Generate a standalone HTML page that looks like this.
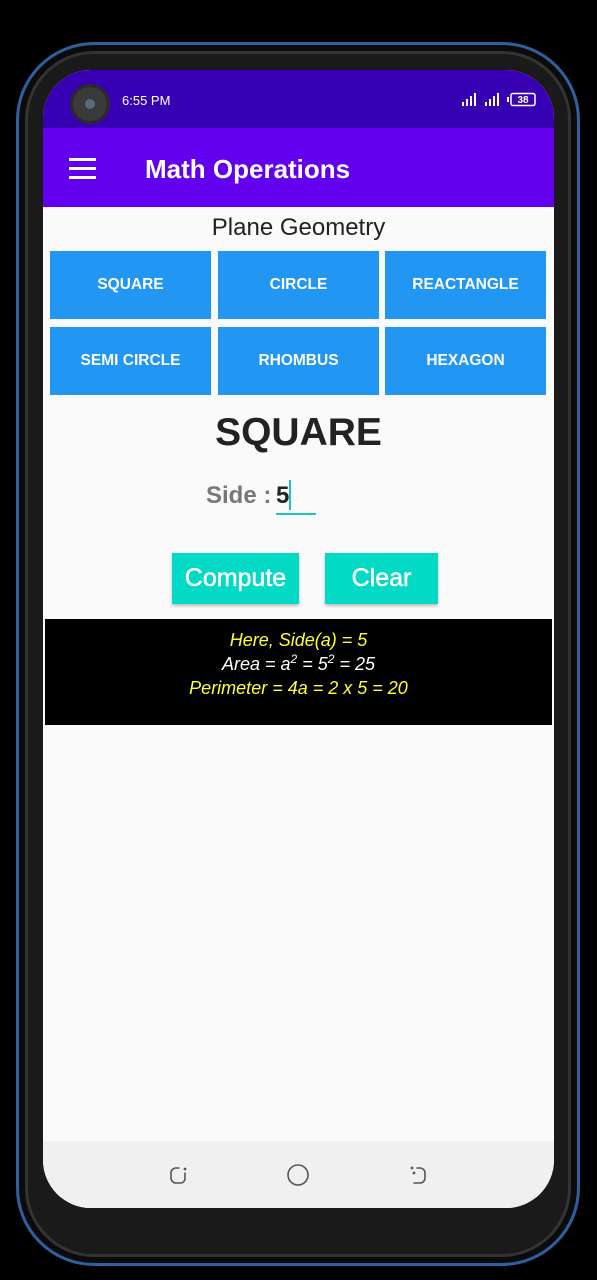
<!DOCTYPE html>
<html><head><style>
*{margin:0;padding:0;box-sizing:border-box}
body{width:597px;height:1280px;background:#000;position:relative;overflow:hidden;font-family:"Liberation Sans",Roboto,sans-serif}
.frame{position:absolute;left:16px;top:42px;width:564px;height:1224px;border-radius:78px;border:3px solid #2e5f9e;background:#1a1a1a;box-shadow:inset 0 0 0 6px #0b0b0b,inset 0 0 0 9px #333}
.screen{position:absolute;left:43px;top:70px;width:511px;height:1138px;border-radius:48px;overflow:hidden;background:#fafafa}
.status{position:absolute;left:0;top:0;width:511px;height:58px;background:#3700b3;color:#fff}
.cam{position:absolute;left:27px;top:14px;width:40px;height:40px;border-radius:50%;background:#3a3a3a;box-shadow:inset 0 0 0 3px #2a2a2a}
.cam:after{content:"";position:absolute;left:15px;top:15px;width:10px;height:10px;border-radius:50%;background:#5a6a78}
.time{position:absolute;left:79px;top:23px;font-size:13px}
.tool{position:absolute;left:0;top:58px;width:511px;height:79px;background:#6200ee;color:#fff}
.ham{position:absolute;left:26px;top:30px;width:27px}
.ham i{display:block;height:3px;background:#fff;margin-bottom:6px}
.title{position:absolute;left:102px;top:26px;font-size:26px;font-weight:bold}
.pg{position:absolute;top:144px;width:511px;text-align:center;font-size:24px;color:#222}
.btn{position:absolute;width:161px;height:68px;background:#2196f3;color:#fff;font-weight:bold;font-size:15.5px;display:flex;align-items:center;justify-content:center}
.h{position:absolute;top:341px;width:511px;text-align:center;font-size:39px;font-weight:bold;color:#222}
.side{position:absolute;left:163px;top:412px;font-size:24px;font-weight:bold;color:#777}
.val{position:absolute;left:233px;top:412px;font-size:24px;font-weight:bold;color:#222}
.cur{position:absolute;left:246px;top:410px;width:2px;height:30px;background:#1cc7b4}
.ul{position:absolute;left:233px;top:443px;width:40px;height:2px;background:#1cc7b4}
.cb{position:absolute;top:483px;height:51px;background:#03dac5;color:#fff;font-size:25px;display:flex;align-items:center;justify-content:center;box-shadow:0 2px 3px rgba(0,0,0,.25);-webkit-text-stroke:0.5px #fff}
.res{position:absolute;left:2px;top:549px;width:507px;height:106px;background:#000;text-align:center;font-style:italic;font-size:18px;line-height:24px;padding-top:9px}
.y{color:#ffff33}.w{color:#fff}
sup{font-size:12px;line-height:0}
.nav{position:absolute;left:0;top:1071px;width:511px;height:67px;background:#f0f0f0}
</style></head><body>
<div class="frame"></div>
<div class="screen">
<div class="status"><div class="cam"></div><div class="time">6:55 PM</div>
<svg style="position:absolute;left:418px;top:22px" width="78" height="16"><g fill="#fff"><rect x="1" y="10" width="2" height="4"/><rect x="5" y="7" width="2" height="7"/><rect x="9" y="4" width="2" height="10"/><rect x="13" y="1" width="2" height="13"/><rect x="24" y="10" width="2" height="4"/><rect x="28" y="7" width="2" height="7"/><rect x="32" y="4" width="2" height="10"/><rect x="36" y="1" width="2" height="13"/><rect x="46" y="5" width="2" height="5"/></g><rect x="50" y="1.5" width="24" height="12" rx="2" fill="none" stroke="#fff" stroke-width="1.5"/><text x="62" y="11" font-size="10" font-weight="bold" fill="#fff" text-anchor="middle" font-family="Liberation Sans">38</text></svg>
</div>
<div class="tool"><div class="ham"><i></i><i></i><i></i></div><div class="title">Math Operations</div></div>
<div class="pg">Plane Geometry</div>
<div class="btn" style="left:7px;top:181px">SQUARE</div>
<div class="btn" style="left:175px;top:181px">CIRCLE</div>
<div class="btn" style="left:342px;top:181px">REACTANGLE</div>
<div class="btn" style="left:7px;top:257px">SEMI CIRCLE</div>
<div class="btn" style="left:175px;top:257px">RHOMBUS</div>
<div class="btn" style="left:342px;top:257px">HEXAGON</div>
<div class="h">SQUARE</div>
<div class="side">Side :</div><div class="val">5</div><div class="cur"></div><div class="ul"></div>
<div class="cb" style="left:129px;width:127px">Compute</div>
<div class="cb" style="left:282px;width:113px">Clear</div>
<div class="res"><div class="y">Here, Side(a) = 5</div><div class="w">Area = a<sup>2</sup> = 5<sup>2</sup> = 25</div><div class="y">Perimeter = 4a = 2 x 5 = 20</div></div>
<div class="nav"><svg width="511" height="67"><g fill="none" stroke="#555" stroke-width="1.6" stroke-linecap="round"><path d="M136 27 h-3 a5 5 0 0 0 -5 5 v5 a5 5 0 0 0 5 5 h5 a5 5 0 0 0 4 -4 v-6"/><circle cx="142" cy="28" r="0.6" fill="#555"/><circle cx="255" cy="34" r="10"/><path d="M374 27 h3 a5 5 0 0 1 5 5 v5 a5 5 0 0 1 -5 5 h-6"/><circle cx="369" cy="27" r="0.6" fill="#555"/><circle cx="371" cy="32" r="0.6" fill="#555"/></g></svg></div>
</div>
</body></html>
